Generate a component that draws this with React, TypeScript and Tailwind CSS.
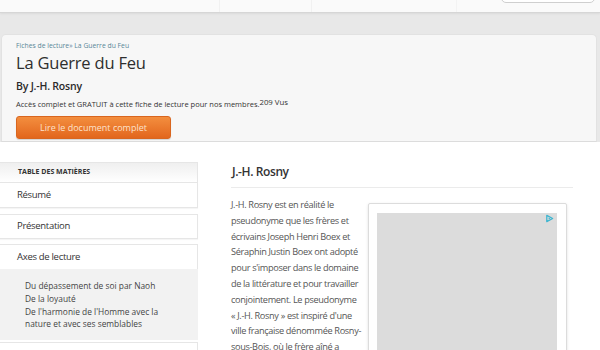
import React from "react";

export default function App() {
  return (
    <div className="w-[600px] h-[350px] overflow-hidden bg-white font-['Open_Sans',sans-serif] text-[#333]">
      {/* top bar */}
      <div className="h-[13px] bg-[#fafafa] border-b border-[#d6d6d6] shadow-[0_1px_2px_rgba(0,0,0,0.06)] flex relative z-10">
        <div className="w-[220px] border-r border-[#f1f1f1]" />
        <div className="w-[92px] border-r border-[#f1f1f1]" />
        <div className="w-[145px] border-r border-[#f3f3f3]" />
        <div className="flex-1 flex justify-end pr-[5px]">
          <div className="w-[94px] h-[24px] -mt-[21px] rounded-[5px] border border-[#cfcfcf] bg-white" />
        </div>
      </div>

      {/* gray band + header card */}
      <div className="bg-[#e8e8e8] pt-[21px] pl-[1px] pr-[3px]">
        <div className="h-[108px] rounded-t-[5px] border border-[#e2e2e2] border-b-[#dcdcdc] bg-[#f7f7f7] pl-[14px] pt-[6px]">
          <div className="text-[6.8px] leading-[10px] text-[#5a8797]">Fiches de lecture» La Guerre du Feu</div>
          <h1 className="text-[16.5px] leading-[24px] text-[#2e2e2e] tracking-[-0.2px]">La Guerre du Feu</h1>
          <div className="mt-[3px] text-[10.5px] leading-[16px] font-semibold text-[#2a2a2a] tracking-[-0.2px]">By J.-H. Rosny</div>
          <div className="mt-[4px] text-[7.5px] leading-[12px] text-[#333] flex items-start">
            <span>Accès complet et GRATUIT à cette fiche de lecture pour nos membres.</span>
            <span className="relative -top-[2px] text-[7.8px]">209 Vus</span>
          </div>
          <button className="mt-[6px] w-[155px] h-[23px] rounded-[3px] border border-[#d9661f] bg-gradient-to-b from-[#f38e3e] to-[#e2661c] text-[9px] text-[#fde2cc] shadow-[0_1px_1px_rgba(0,0,0,0.15)]">
            Lire le document complet
          </button>
        </div>
      </div>

      {/* main */}
      <div className="flex">
        {/* sidebar */}
        <div className="w-[198px] mt-[20px] flex flex-col">
          <div className="h-[21px] border border-l-0 border-[#e6e6e6] bg-gradient-to-b from-[#efefef] to-white pl-[18px] flex items-center">
            <span className="text-[7px] font-bold text-[#333]">TABLE DES MATIÈRES</span>
          </div>
          <div className="h-[25px] border border-l-0 border-t-0 border-[#e6e6e6] bg-white pl-[17px] flex items-center shadow-[0_1px_1px_rgba(0,0,0,0.04)]">
            <span className="text-[9.5px] tracking-[-0.3px] text-[#333]">Résumé</span>
          </div>
          <div className="mt-[6px] h-[25px] border border-l-0 border-[#e6e6e6] bg-white pl-[17px] flex items-center shadow-[0_1px_1px_rgba(0,0,0,0.04)]">
            <span className="text-[9.5px] tracking-[-0.3px] text-[#333]">Présentation</span>
          </div>
          <div className="mt-[5px] h-[25px] border border-l-0 border-b-0 border-[#e6e6e6] bg-white pl-[17px] flex items-center">
            <span className="text-[9.5px] tracking-[-0.3px] text-[#333]">Axes de lecture</span>
          </div>
          <div className="h-[71px] bg-[#f2f2f2] pl-[25px] pt-[11px] flex flex-col gap-[1px] text-[8.4px] leading-[12px] text-[#444]">
            <div>Du dépassement de soi par Naoh</div>
            <div>De la loyauté</div>
            <div>
              De l'harmonie de l'Homme avec la
              <br />
              nature et avec ses semblables
            </div>
          </div>
          <div className="mt-[2px] h-[25px] border border-l-0 border-[#e6e6e6] bg-white pl-[17px] flex items-center">
            <span className="text-[9.5px] tracking-[-0.3px] text-[#333] relative top-[3px]">Présentation de l'auteur</span>
          </div>
        </div>

        {/* content */}
        <div className="ml-[33px] w-[342px] mt-[21px]">
          <div className="border-b border-[#ebebeb] pb-[6px] pl-[1px]">
            <h2 className="text-[12px] leading-[18px] font-semibold tracking-[-0.4px] text-[#333]">J.-H. Rosny</h2>
          </div>
          <div className="flex mt-[9px]">
            <p className="w-[131px] whitespace-nowrap text-[9.2px] tracking-[-0.35px] leading-[15.8px] text-[#555]">
              J.-H. Rosny est en réalité le
              <br />
              pseudonyme que les frères et
              <br />
              écrivains Joseph Henri Boex et
              <br />
              Séraphin Justin Boex ont adopté
              <br />
              pour s'imposer dans le domaine
              <br />
              de la littérature et pour travailler
              <br />
              conjointement. Le pseudonyme
              <br />
              « J.-H. Rosny » est inspiré d'une
              <br />
              ville française dénommée Rosny-
              <br />
              sous-Bois, où le frère aîné a
            </p>
            <div className="ml-[6px] mt-[6px] w-[199px] h-[200px] shrink-0 rounded-[2px] border border-[#dcdcdc] bg-white shadow-[0_1px_3px_rgba(0,0,0,0.12)] pl-[8px] pr-[9px] pt-[9px]">
              <div className="relative h-full bg-[#dcdcdc]">
                <svg className="absolute right-[3px] top-[1px]" width="9" height="9" viewBox="0 0 10 10">
                  <path d="M2 1.5 L8.5 5 L2 8.5 Z" fill="none" stroke="#3cb5d0" strokeWidth="1.4" strokeLinejoin="round" />
                  <path d="M4 4 L6 5 L4 6 Z" fill="#3cb5d0" />
                </svg>
              </div>
            </div>
          </div>
        </div>
      </div>
    </div>
  );
}
